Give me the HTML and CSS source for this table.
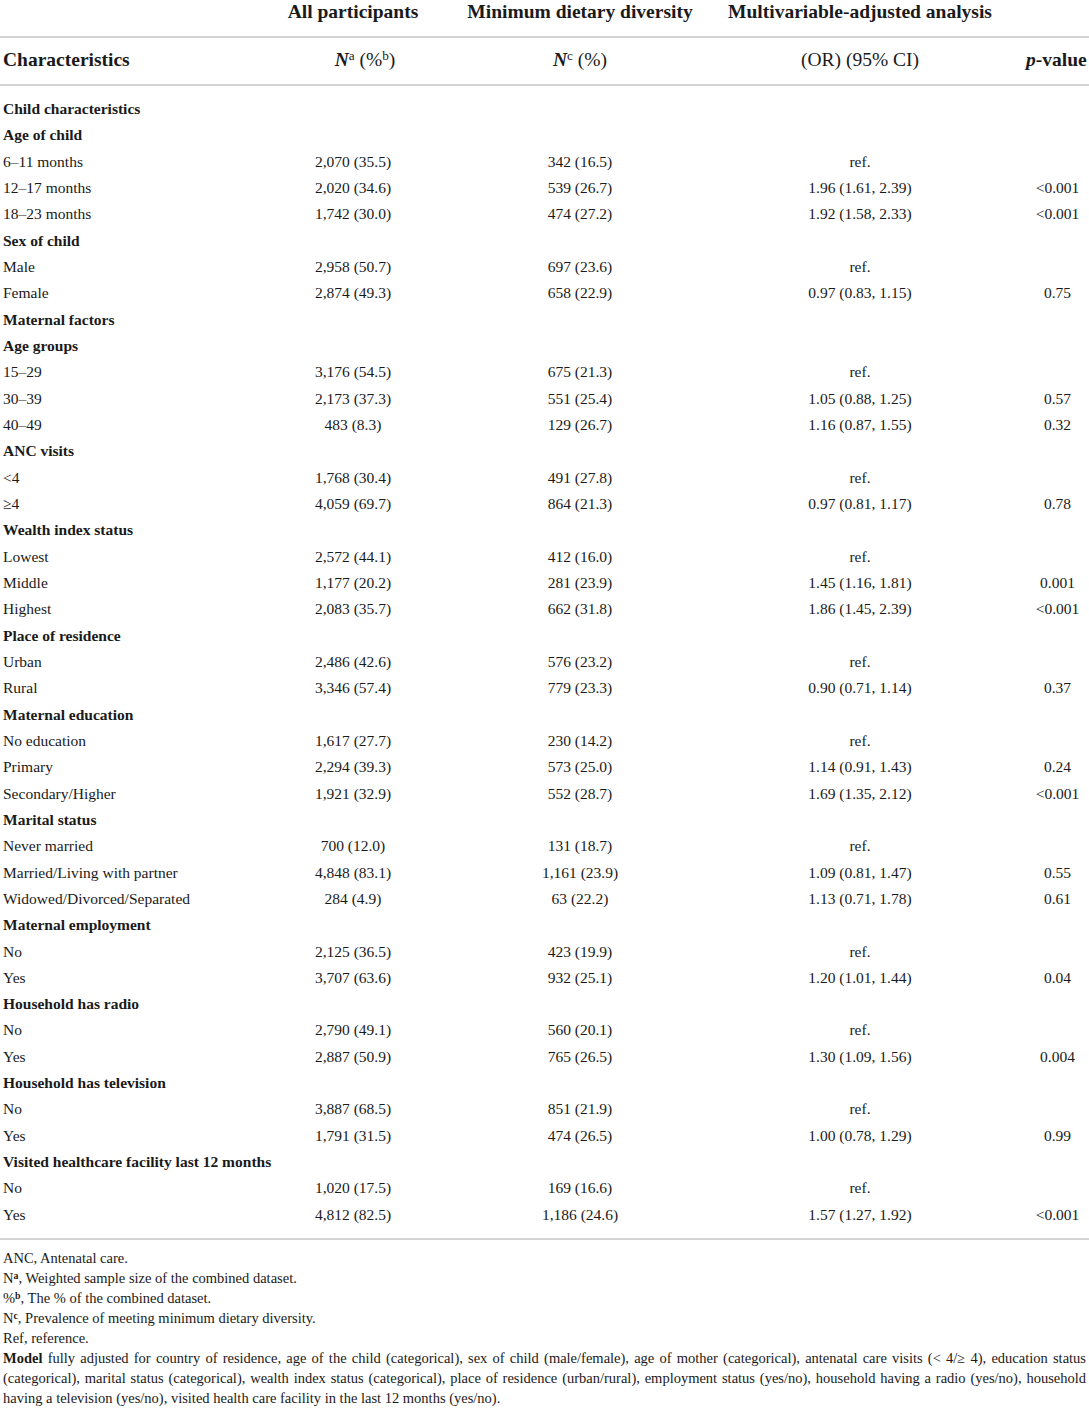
FILE: index.html
```html
<!DOCTYPE html>
<html lang="en">
<head>
<meta charset="utf-8">
<title>Table</title>
<link rel="stylesheet" href="styles.css">
</head>
<body>
<div class="page">
<table class="data">
<colgroup>
<col class="c1"><col class="c2"><col class="c3"><col class="c4"><col class="c5">
</colgroup>
<thead>
<tr class="h1">
<th class="left"></th>
<th>All participants</th>
<th>Minimum dietary diversity</th>
<th>Multivariable-adjusted analysis</th>
<th></th>
</tr>
<tr class="h2">
<th class="left">Characteristics</th>
<th class="shift"><i>N</i><sup>a</sup> <span class="reg">(%<sup>b</sup>)</span></th>
<th><i>N</i><sup>c</sup> <span class="reg">(%)</span></th>
<th><span class="reg">(OR) (95% CI)</span></th>
<th class="pv"><i>p</i>-value</th>
</tr>
</thead>
<tbody>
<tr class="sp"><td colspan="5"></td></tr>
<tr class="sec"><td colspan="5">Child characteristics</td></tr>
<tr class="sec"><td colspan="5">Age of child</td></tr>
<tr><td>6–11 months</td><td>2,070 (35.5)</td><td>342 (16.5)</td><td>ref.</td><td></td></tr>
<tr><td>12–17 months</td><td>2,020 (34.6)</td><td>539 (26.7)</td><td>1.96 (1.61, 2.39)</td><td>&lt;0.001</td></tr>
<tr><td>18–23 months</td><td>1,742 (30.0)</td><td>474 (27.2)</td><td>1.92 (1.58, 2.33)</td><td>&lt;0.001</td></tr>
<tr class="sec"><td colspan="5">Sex of child</td></tr>
<tr><td>Male</td><td>2,958 (50.7)</td><td>697 (23.6)</td><td>ref.</td><td></td></tr>
<tr><td>Female</td><td>2,874 (49.3)</td><td>658 (22.9)</td><td>0.97 (0.83, 1.15)</td><td>0.75</td></tr>
<tr class="sec"><td colspan="5">Maternal factors</td></tr>
<tr class="sec"><td colspan="5">Age groups</td></tr>
<tr><td>15–29</td><td>3,176 (54.5)</td><td>675 (21.3)</td><td>ref.</td><td></td></tr>
<tr><td>30–39</td><td>2,173 (37.3)</td><td>551 (25.4)</td><td>1.05 (0.88, 1.25)</td><td>0.57</td></tr>
<tr><td>40–49</td><td>483 (8.3)</td><td>129 (26.7)</td><td>1.16 (0.87, 1.55)</td><td>0.32</td></tr>
<tr class="sec"><td colspan="5">ANC visits</td></tr>
<tr><td>&lt;4</td><td>1,768 (30.4)</td><td>491 (27.8)</td><td>ref.</td><td></td></tr>
<tr><td>≥4</td><td>4,059 (69.7)</td><td>864 (21.3)</td><td>0.97 (0.81, 1.17)</td><td>0.78</td></tr>
<tr class="sec"><td colspan="5">Wealth index status</td></tr>
<tr><td>Lowest</td><td>2,572 (44.1)</td><td>412 (16.0)</td><td>ref.</td><td></td></tr>
<tr><td>Middle</td><td>1,177 (20.2)</td><td>281 (23.9)</td><td>1.45 (1.16, 1.81)</td><td>0.001</td></tr>
<tr><td>Highest</td><td>2,083 (35.7)</td><td>662 (31.8)</td><td>1.86 (1.45, 2.39)</td><td>&lt;0.001</td></tr>
<tr class="sec"><td colspan="5">Place of residence</td></tr>
<tr><td>Urban</td><td>2,486 (42.6)</td><td>576 (23.2)</td><td>ref.</td><td></td></tr>
<tr><td>Rural</td><td>3,346 (57.4)</td><td>779 (23.3)</td><td>0.90 (0.71, 1.14)</td><td>0.37</td></tr>
<tr class="sec"><td colspan="5">Maternal education</td></tr>
<tr><td>No education</td><td>1,617 (27.7)</td><td>230 (14.2)</td><td>ref.</td><td></td></tr>
<tr><td>Primary</td><td>2,294 (39.3)</td><td>573 (25.0)</td><td>1.14 (0.91, 1.43)</td><td>0.24</td></tr>
<tr><td>Secondary/Higher</td><td>1,921 (32.9)</td><td>552 (28.7)</td><td>1.69 (1.35, 2.12)</td><td>&lt;0.001</td></tr>
<tr class="sec"><td colspan="5">Marital status</td></tr>
<tr><td>Never married</td><td>700 (12.0)</td><td>131 (18.7)</td><td>ref.</td><td></td></tr>
<tr><td>Married/Living with partner</td><td>4,848 (83.1)</td><td>1,161 (23.9)</td><td>1.09 (0.81, 1.47)</td><td>0.55</td></tr>
<tr><td>Widowed/Divorced/Separated</td><td>284 (4.9)</td><td>63 (22.2)</td><td>1.13 (0.71, 1.78)</td><td>0.61</td></tr>
<tr class="sec"><td colspan="5">Maternal employment</td></tr>
<tr><td>No</td><td>2,125 (36.5)</td><td>423 (19.9)</td><td>ref.</td><td></td></tr>
<tr><td>Yes</td><td>3,707 (63.6)</td><td>932 (25.1)</td><td>1.20 (1.01, 1.44)</td><td>0.04</td></tr>
<tr class="sec"><td colspan="5">Household has radio</td></tr>
<tr><td>No</td><td>2,790 (49.1)</td><td>560 (20.1)</td><td>ref.</td><td></td></tr>
<tr><td>Yes</td><td>2,887 (50.9)</td><td>765 (26.5)</td><td>1.30 (1.09, 1.56)</td><td>0.004</td></tr>
<tr class="sec"><td colspan="5">Household has television</td></tr>
<tr><td>No</td><td>3,887 (68.5)</td><td>851 (21.9)</td><td>ref.</td><td></td></tr>
<tr><td>Yes</td><td>1,791 (31.5)</td><td>474 (26.5)</td><td>1.00 (0.78, 1.29)</td><td>0.99</td></tr>
<tr class="sec"><td colspan="5">Visited healthcare facility last 12 months</td></tr>
<tr><td>No</td><td>1,020 (17.5)</td><td>169 (16.6)</td><td>ref.</td><td></td></tr>
<tr><td>Yes</td><td>4,812 (82.5)</td><td>1,186 (24.6)</td><td>1.57 (1.27, 1.92)</td><td>&lt;0.001</td></tr>
<tr class="sp last"><td colspan="5"></td></tr>
</tbody>
</table>
<div class="notes">
<p>ANC, Antenatal care.</p>
<p>N<sup>a</sup>, Weighted sample size of the combined dataset.</p>
<p>%<sup>b</sup>, The % of the combined dataset.</p>
<p>N<sup>c</sup>, Prevalence of meeting minimum dietary diversity.</p>
<p>Ref, reference.</p>
<p class="model"><span class="jl"><b>Model</b> fully adjusted for country of residence, age of the child (categorical), sex of child (male/female), age of mother (categorical), antenatal care visits (&lt; 4/≥ 4), education status</span><span class="jl">(categorical), marital status (categorical), wealth index status (categorical), place of residence (urban/rural), employment status (yes/no), household having a radio (yes/no), household</span><span class="ll">having a television (yes/no), visited health care facility in the last 12 months (yes/no).</span></p>
</div>
</div>
</body>
</html>
```

FILE: styles.css
```css
html, body {
  margin: 0;
  padding: 0;
  background: #ffffff;
}

body {
  font-family: "Liberation Serif", "Times New Roman", serif;
  color: #1a1a1a;
}

.page {
  width: 1089px;
}

.data {
  width: 1089px;
  border-collapse: collapse;
  table-layout: fixed;
}

.c1 { width: 240px; }
.c2 { width: 226px; }
.c3 { width: 228px; }
.c4 { width: 332px; }
.c5 { width: 63px; }

.data th {
  font-size: 19.5px;
  font-weight: bold;
  text-align: center;
  line-height: 24px;
  padding: 0;
  white-space: nowrap;
}

.data th.left {
  text-align: left;
  padding-left: 3px;
}

.data th.shift {
  padding-left: 24px;
}

.data th.pv {
  text-align: right;
  padding-right: 3px;
}

.data th .reg {
  font-weight: normal;
}

.data sup {
  font-size: 0.68em;
  line-height: 0;
  vertical-align: 0.45em;
  font-weight: normal;
}

.h1 th {
  height: 36px;
  padding-bottom: 12px;
  box-sizing: border-box;
  vertical-align: top;
  border-bottom: 2px solid #d4d4d4;
}

.h2 th {
  height: 46px;
  padding-top: 10px;
  padding-bottom: 12px;
  box-sizing: border-box;
  vertical-align: top;
  border-bottom: 2px solid #d4d4d4;
}

.data td {
  font-size: 15.5px;
  line-height: 26.33px;
  padding: 0;
  text-align: center;
  white-space: nowrap;
}

.data td:first-child {
  text-align: left;
  padding-left: 3px;
}

.sec td {
  font-weight: bold;
}

.sp td {
  height: 10px;
  line-height: 10px;
  padding: 0;
}

.sp.last td {
  border-bottom: 2px solid #d4d4d4;
}

.notes {
  padding: 8px 3px 0 3px;
  font-size: 14.5px;
  line-height: 20px;
}

.notes p {
  margin: 0;
}

.notes sup {
  font-size: 0.68em;
  line-height: 0;
  vertical-align: 0.45em;
  font-weight: bold;
}

.model .jl {
  display: block;
  text-align: justify;
  text-align-last: justify;
  white-space: nowrap;
}

.model .ll {
  display: block;
}
```
